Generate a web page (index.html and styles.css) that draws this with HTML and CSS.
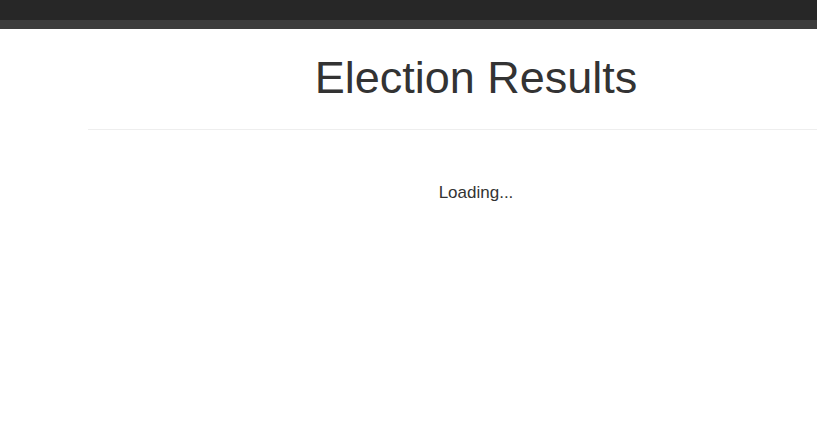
FILE: index.html
```html
<!DOCTYPE html>
<html>
<head>
<meta charset="utf-8">
<link rel="stylesheet" href="styles.css">
</head>
<body>
<div class="topbar"><div class="topbar-main"></div><div class="topbar-sub"></div></div>
<div class="container">
  <h1 class="title">Election Results</h1>
  <p class="loading">Loading...</p>
</div>
</body>
</html>
```
FILE: styles.css
```css
html, body { margin: 0; padding: 0; background: #fff; }
body { font-family: "Liberation Sans", Arial, sans-serif; color: #333; }
.topbar-main { height: 20px; background: #272727; }
.topbar-sub { height: 9px; background: #3c3c3c; }
.container { margin-left: 88px; }
.title {
  margin: 0;
  padding: 24px 0 26px 47px;
  font-size: 45px;
  font-weight: 400;
  line-height: 50px;
  text-align: center;
  border-bottom: 1px solid #eee;
}
.loading { margin: 53px 0 0; padding-left: 47px; font-size: 17px; line-height: 20px; text-align: center; }
```
